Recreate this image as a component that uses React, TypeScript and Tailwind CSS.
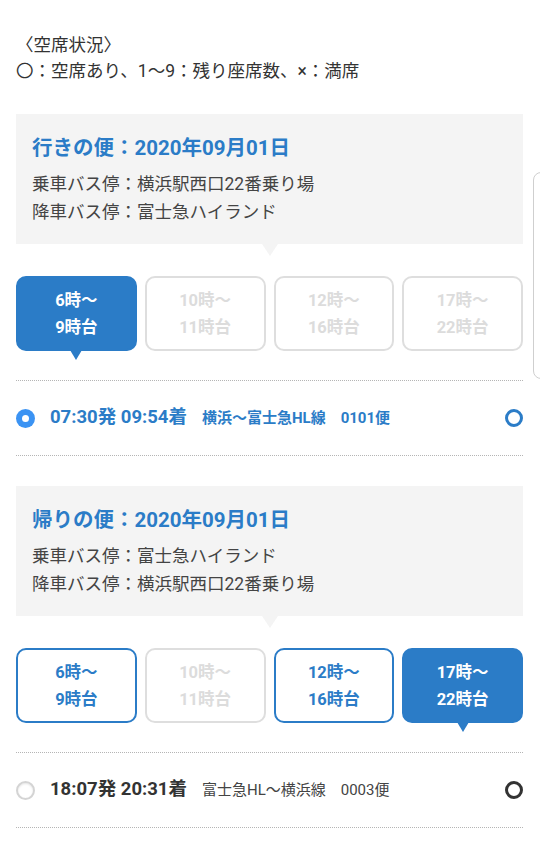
const font = "font-['Roboto','Noto_Sans_CJK_JP',sans-serif]";

type Slot = { l1: string; l2: string; state: "active" | "on" | "off" };

const TripBox = ({ label, date, from, to }: { label: string; date: string; from: string; to: string }) => (
  <div className="relative bg-[#f4f4f4] h-[130px] px-[16px] pt-[20px]">
    <h2 className="text-[20.5px] leading-[28px] font-bold text-[#2b7cc7]">
      {label}：{date}
    </h2>
    <p className="mt-[8px] text-[17.5px] leading-[28px] text-[#444]">乗車バス停：{from}</p>
    <p className="text-[17.5px] leading-[28px] text-[#444]">降車バス停：{to}</p>
    {/* pointer */}
    <div className="absolute left-1/2 -translate-x-1/2 -bottom-[12px] w-0 h-0 border-x-[8px] border-x-transparent border-t-[12px] border-t-[#f4f4f4]"></div>
  </div>
);

const SlotButtons = ({ slots }: { slots: Slot[] }) => (
  <div className="grid grid-cols-4 gap-2 mt-[32px]">
    {slots.map((s) => (
      <div
        key={s.l1}
        className={
          s.state === "active"
            ? "relative h-[75px] rounded-[10px] bg-[#2b7cc7] border-2 border-[#2b7cc7] text-white flex flex-col items-center justify-center"
            : s.state === "on"
              ? "relative h-[75px] rounded-[10px] bg-white border-2 border-[#2b7cc7] text-[#2b7cc7] flex flex-col items-center justify-center"
              : "relative h-[75px] rounded-[10px] bg-white border-2 border-[#dedede] text-[#dcdcdc] flex flex-col items-center justify-center"
        }
      >
        <span className="text-[16.5px] leading-[27px] font-bold">{s.l1}</span>
        <span className="text-[16.5px] leading-[27px] font-bold">{s.l2}</span>
        {s.state === "active" && (
          <div className="absolute left-1/2 -translate-x-1/2 -bottom-[11px] w-0 h-0 border-x-[6px] border-x-transparent border-t-[10px] border-t-[#2b7cc7]"></div>
        )}
      </div>
    ))}
  </div>
);

const BusRow = ({
  selected,
  time,
  route,
  no,
}: {
  selected: boolean;
  time: string;
  route: string;
  no: string;
}) => (
  <div className="mt-[29px] border-y border-dotted border-[#b5b5b5]">
    <div className="h-[74px] flex items-center">
      {selected ? (
        <span className="w-[19px] h-[19px] rounded-full bg-[#3b93f3] flex items-center justify-center">
          <span className="w-[7px] h-[7px] rounded-full bg-white"></span>
        </span>
      ) : (
        <span className="w-[19px] h-[19px] rounded-full border-2 border-[#d4d4d4] shadow-[inset_0_1px_2px_rgba(0,0,0,0.1)]"></span>
      )}
      <span
        className={
          selected
            ? "ml-[15px] text-[18.5px] font-bold text-[#2b7cc7]"
            : "ml-[15px] text-[18.5px] font-bold text-[#333]"
        }
      >
        {time}
      </span>
      <span
        className={
          selected
            ? "ml-[15px] text-[15px] font-bold text-[#2b7cc7]"
            : "ml-[15px] text-[15px] text-[#444]"
        }
      >
        {route}
      </span>
      <span
        className={
          selected
            ? "ml-[15px] text-[15px] font-bold text-[#2b7cc7]"
            : "ml-[15px] text-[15px] text-[#444]"
        }
      >
        {no}
      </span>
      <span
        className={
          selected
            ? "ml-auto w-[18px] h-[18px] rounded-full border-[3px] border-[#2b7cc7]"
            : "ml-auto w-[18px] h-[18px] rounded-full border-[3px] border-[#333]"
        }
      ></span>
    </div>
  </div>
);

export default function App() {
  return (
    <div className={`relative w-[540px] h-[860px] overflow-hidden bg-white ${font}`}>
      <div className="px-4 pt-8">
        <p className="text-[17.5px] leading-[26px] text-[#333]">〈空席状況〉</p>
        <p className="text-[17.5px] leading-[26px] text-[#333]">〇：空席あり、1〜9：残り座席数、×：満席</p>

        <div className="mt-[30px] w-[507px]">
          <TripBox label="行きの便" date="2020年09月01日" from="横浜駅西口22番乗り場" to="富士急ハイランド" />
          <SlotButtons
            slots={[
              { l1: "6時〜", l2: "9時台", state: "active" },
              { l1: "10時〜", l2: "11時台", state: "off" },
              { l1: "12時〜", l2: "16時台", state: "off" },
              { l1: "17時〜", l2: "22時台", state: "off" },
            ]}
          />
          <BusRow selected time="07:30発 09:54着" route="横浜〜富士急HL線" no="0101便" />
        </div>

        <div className="mt-[30px] w-[507px]">
          <TripBox label="帰りの便" date="2020年09月01日" from="富士急ハイランド" to="横浜駅西口22番乗り場" />
          <SlotButtons
            slots={[
              { l1: "6時〜", l2: "9時台", state: "on" },
              { l1: "10時〜", l2: "11時台", state: "off" },
              { l1: "12時〜", l2: "16時台", state: "on" },
              { l1: "17時〜", l2: "22時台", state: "active" },
            ]}
          />
          <BusRow selected={false} time="18:07発 20:31着" route="富士急HL〜横浜線" no="0003便" />
        </div>
      </div>

      {/* floating panel edge on the right */}
      <div className="absolute left-[533px] top-[172px] w-[30px] h-[207px] rounded-[8px] border border-[#cfcfcf] bg-white"></div>
    </div>
  );
}
